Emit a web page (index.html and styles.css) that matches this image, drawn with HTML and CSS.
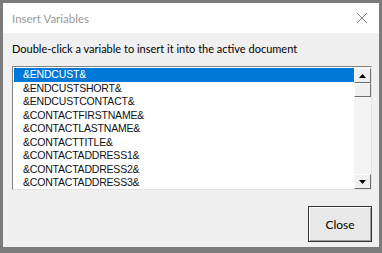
FILE: index.html
```html
<!DOCTYPE html>
<html lang="en">
<head>
    <meta charset="UTF-8">
    <title>Insert Variables</title>
    <link rel="stylesheet" href="styles.css">
</head>
<body>
    <div class="window">
        <div class="titlebar">
            <span class="title">Insert Variables</span>
            <svg class="close-x" width="12" height="12" viewBox="0 0 12 12">
                <path d="M1 1 L11 11 M11 1 L1 11" stroke="#8a8a8a" stroke-width="1" fill="none"/>
            </svg>
        </div>
        <div class="content">
            <p class="hint">Double-click a variable to insert it into the active document</p>
            <div class="listbox">
                <ul class="items">
                    <li class="selected">&amp;ENDCUST&amp;</li>
                    <li>&amp;ENDCUSTSHORT&amp;</li>
                    <li>&amp;ENDCUSTCONTACT&amp;</li>
                    <li>&amp;CONTACTFIRSTNAME&amp;</li>
                    <li>&amp;CONTACTLASTNAME&amp;</li>
                    <li>&amp;CONTACTTITLE&amp;</li>
                    <li>&amp;CONTACTADDRESS1&amp;</li>
                    <li>&amp;CONTACTADDRESS2&amp;</li>
                    <li>&amp;CONTACTADDRESS3&amp;</li>
                </ul>
                <div class="scrollbar">
                    <div class="arrow">
                        <svg width="7" height="4" viewBox="0 0 7 4"><path d="M0 4 L3.5 0 L7 4 Z" fill="#000"/></svg>
                    </div>
                    <div class="thumb"></div>
                    <div class="track"></div>
                    <div class="arrow">
                        <svg width="7" height="4" viewBox="0 0 7 4"><path d="M0 0 L3.5 4 L7 0 Z" fill="#000"/></svg>
                    </div>
                </div>
            </div>
            <div class="actions">
                <button class="btn">Close</button>
            </div>
        </div>
    </div>
</body>
</html>
```

FILE: styles.css
```css
body {
    margin: 0;
    width: 382px;
    height: 253px;
    background: #7b7b7b;
    font-family: Lato, "Open Sans", sans-serif;
    overflow: hidden;
}
.window {
    margin: 3px 3px 0 3px;
    height: 244px;
    display: flex;
    flex-direction: column;
    background: #f0f0f0;
}
.titlebar {
    height: 30px;
    background: #fff;
    display: flex;
    align-items: center;
    justify-content: space-between;
    padding: 0 11px 0 9px;
    flex-shrink: 0;
}
.title {
    font-size: 11.5px;
    color: #9a9a9a;
}
.content {
    flex: 1;
    display: flex;
    flex-direction: column;
    padding: 0 7px 0 9px;
}
.hint {
    margin: 8px 0 0 0;
    font-size: 11px;
    color: #000;
    line-height: 16px;
}
.listbox {
    margin-top: 9px;
    height: 124px;
    display: flex;
    background: #fff;
    border: 1px solid #828282;
    border-right-color: #e3e3e3;
    border-bottom-color: #e3e3e3;
    box-sizing: border-box;
}
.items {
    flex: 1;
    list-style: none;
    margin: 0;
    padding: 1px 0 0 1px;
    font-family: "Liberation Sans", Arial, sans-serif;
    font-size: 10.5px;
    letter-spacing: -0.2px;
}
.items li {
    height: 13.5px;
    line-height: 13px;
    padding-left: 9px;
    color: #111;
}
.items li.selected {
    background: #0078d7;
    color: #fff;
}
.scrollbar {
    width: 17px;
    display: flex;
    flex-direction: column;
    padding-top: 1px;
    background: #f4f4f4;
}
.arrow {
    height: 15px;
    display: flex;
    align-items: center;
    justify-content: center;
    background: #f0f0f0;
    border: 1px solid #fff;
    border-right-color: #6f6f6f;
    border-bottom-color: #6f6f6f;
    box-sizing: border-box;
}
.thumb {
    height: 14px;
    background: #f0f0f0;
    border: 1px solid #fff;
    border-right-color: #6f6f6f;
    border-bottom-color: #6f6f6f;
    box-sizing: border-box;
}
.track {
    flex: 1;
}
.actions {
    display: flex;
    justify-content: flex-end;
    margin-top: 16px;
}
.btn {
    width: 64px;
    height: 36px;
    background: #e9e9e9;
    border: 1px solid #333;
    box-shadow: inset 1px 1px 0 #fff, inset -1px -1px 0 #a0a0a0;
    font-family: Lato, "Open Sans", sans-serif;
    font-size: 12px;
    color: #000;
    padding: 0;
}
```
